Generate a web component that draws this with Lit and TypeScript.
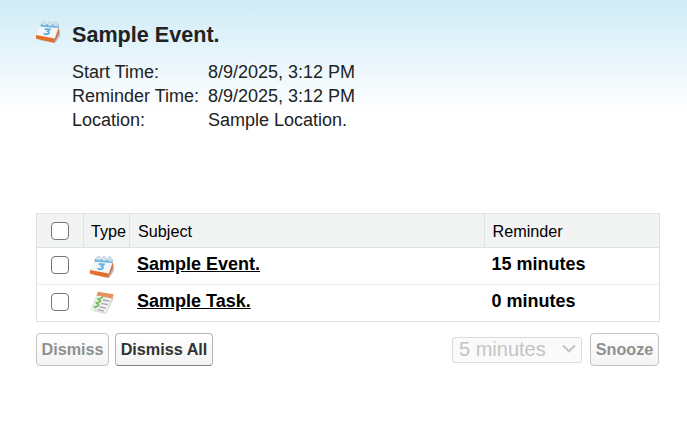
import { LitElement, html, css, svg } from "lit";
import { customElement, property } from "lit/decorators.js";

@customElement("item-icon")
class ItemIcon extends LitElement {
  @property() kind = "event";
  static styles = css`
    :host { display: block; width: 24px; height: 24px; }
    svg { display: block; filter: blur(0.45px); }
  `;
  render() {
    return html`<svg width="24" height="24" viewBox="0 0 24 24">
      ${this.kind === "event"
        ? svg`
          <path d="M3 21 L19 24 L24 17 L23.5 11 Z" fill="#8b7468" opacity=".45"/>
          <path d="M0 15.4 L18.6 18.6 L18.4 23.8 L0 19.8 Z" fill="#e2702c"/>
          <path d="M18.6 18.6 L23 7 L23.2 14 L18.4 23.8 Z" fill="#cf7a4c"/>
          <path d="M4.6 6 L23 7.2 L18.8 19.6 L0 16 Z" fill="#f3f5f8"/>
          <path d="M5.4 4.6 L23 5.8 L22.2 9 L4.2 7.6 Z" fill="#5fb2dd"/>
          <path d="M6.8 6 V3.4 Q8.5 .6 10.2 3.4 V6.2 M12.4 6.6 V3.6 Q14.1 .9 15.8 3.6 V6.9 M18 7 V4 Q19.6 1.4 21.2 4 V7.4" fill="#d3e2ec" stroke="#c4d8e6" stroke-width="1.2"/>
          <path d="M8.8 10 L13.6 10.5 L11.8 12.3 Q14 13.2 12.2 14.8 Q10.6 15.8 7.6 14.6" fill="none" stroke="#5db2e2" stroke-width="1.8"/>`
        : svg`
          <path d="M3 20 L16 23 L23.5 8 L22 6 Z" fill="#999" opacity=".4"/>
          <path d="M7.5 2 L23.3 4.5 L15.8 22.5 L0.8 18.5 Z" fill="#eef0f1" stroke="#cfd2d5" stroke-width=".5"/>
          <path d="M8 .8 L23.8 3.2 L22.2 7.4 L6.6 4.6 Z" fill="#e5935f"/>
          <path d="M13 9 L19.5 10.2 M11.3 12.4 L17.8 13.7 M9.5 15.8 L15.8 17.2 M7.8 18.6 L13.8 20.2" stroke="#a3a6aa" stroke-width="1.3"/>
          <path d="M7.3 7.2 L8.9 8.8 L13 5.6 M5.6 11 L7.2 12.6 L11.2 9.4 M3.9 15 L5.4 16.6 L9.4 13.3" fill="none" stroke="#6fba55" stroke-width="1.7"/>`}
    </svg>`;
  }
}

@customElement("app-root")
class AppRoot extends LitElement {
  private details = [
    ["Start Time:", "8/9/2025, 3:12 PM"],
    ["Reminder Time:", "8/9/2025, 3:12 PM"],
    ["Location:", "Sample Location."],
  ];
  private rows = [
    { kind: "event", subject: "Sample Event.", due: "15 minutes" },
    { kind: "task", subject: "Sample Task.", due: "0 minutes" },
  ];
  static styles = css`
    :host {
      display: block; box-sizing: border-box; width: 100%; height: 429px;
      padding: 19px 27px 0 36px; overflow: hidden;
      font-family: "Liberation Sans", Arial, sans-serif; font-size: 18px; color: #222;
      background: linear-gradient(#d0ecf7 0, #d5eef8 14px, #fff 112px) no-repeat #fff;
    }
    .head { display: grid; grid-template-columns: 24px 1fr; column-gap: 12px; height: 194px; align-content: start; }
    .title { margin: 0; font-size: 21.6px; line-height: 32px; font-weight: bold; }
    .details { grid-column: 2; display: grid; grid-template-columns: 136px 1fr; line-height: 24px; margin: 9px 0 0; }
    .details dt, .details dd { margin: 0; }
    .table { box-sizing: border-box; width: 624px; border: 1px solid #e0e3e5; color: #000; }
    .row { display: grid; grid-template-columns: 46px 46px 355px 1fr; height: 36px; border-top: 1px solid #ececec; }
    .row.top { height: 33px; overflow: hidden; border: 0; background: #f2f3f3; font-size: 16.2px; line-height: 35px; }
    .row.first { border-top-color: #e0e3e5; }
    .cell { padding-left: 8px; font-weight: bold; line-height: 32px; white-space: nowrap; }
    .cell.due { padding-left: 7.5px; }
    .top .cell { border-left: 1px solid #e0e3e5; font-weight: normal; line-height: 35px; }
    .pic { padding: 6px 0 0 7px; }
    .top .pic { padding: 0 0 0 7px; }
    .pick { display: flex; align-items: center; justify-content: center; height: 34px; }
    .top .pick { height: 33px; }
    .check { appearance: none; box-sizing: border-box; width: 18px; height: 18px; margin: 0; border: 1.5px solid #767676; border-radius: 4px; background: #fff; }
    .link { color: #000; text-decoration: underline; }
    .bar { display: flex; align-items: center; width: 623px; margin-top: 11px; }
    .btn {
      box-sizing: border-box; height: 33px; padding: 0 0 1px; border: 1px solid #b5b5b5; border-bottom-color: #7f7f7f;
      border-radius: 4px; background: linear-gradient(#fff, #f3f3f3); color: #333;
      font: bold 16.2px/30px "Liberation Sans", Arial, sans-serif;
    }
    .btn[disabled] { border-color: #c4c4c4; color: #909090; }
    .dismiss { width: 73px; margin-right: 6px; }
    .all { width: 98px; }
    .snooze { width: 69px; margin-left: 8px; }
    .select {
      box-sizing: border-box; display: flex; align-items: center; justify-content: space-between;
      width: 130px; height: 26px; margin-left: auto; padding: 0 5px 2px 6px;
      border: 1px solid #dcdcdc; border-radius: 3px; background: #fafafa; color: #c4c4c4; font-size: 20px; line-height: 22px;
    }
  `;
  render() {
    return html`
      <header class="head">
        <item-icon kind="event"></item-icon>
        <h1 class="title">Sample Event.</h1>
        <dl class="details">${this.details.map(([k, v]) => html`<dt>${k}</dt><dd>${v}</dd>`)}</dl>
      </header>
      <div class="table">
        <div class="row top">
          <div class="pick"><input class="check" type="checkbox"></div>
          <div class="cell pic">Type</div><div class="cell">Subject</div><div class="cell due">Reminder</div>
        </div>
        ${this.rows.map((r, i) => html`<div class="row ${i ? "" : "first"}">
          <div class="pick"><input class="check" type="checkbox"></div>
          <div class="pic"><item-icon kind=${r.kind}></item-icon></div>
          <div class="cell"><a class="link">${r.subject}</a></div>
          <div class="cell due">${r.due}</div>
        </div>`)}
      </div>
      <div class="bar">
        <button class="btn dismiss" disabled>Dismiss</button>
        <button class="btn all">Dismiss All</button>
        <div class="select">5 minutes
          <svg width="14" height="9" viewBox="0 0 14 9"><path d="M1 1.5 L7 7.3 L13 1.5" fill="none" stroke="#c4c4c4" stroke-width="2"/></svg>
        </div>
        <button class="btn snooze" disabled>Snooze</button>
      </div>`;
  }
}
